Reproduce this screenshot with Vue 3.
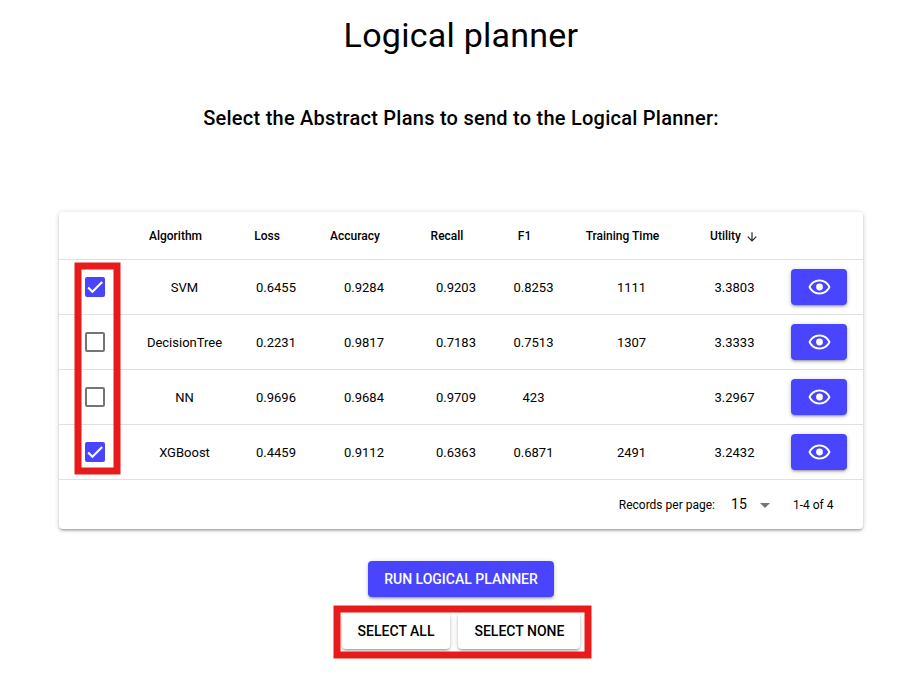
<template>
  <div class="planner-page">
    <h4 class="page-title">Logical planner</h4>
    <h6 class="page-subtitle">Select the Abstract Plans to send to the Logical Planner:</h6>

    <div class="plans-card">
      <table class="plans-table">
        <colgroup>
          <col class="col-check" />
          <col v-for="column in columns" :key="column.name" :class="'col-' + column.name" />
          <col class="col-action" />
        </colgroup>
        <thead>
          <tr>
            <th></th>
            <th v-for="column in columns" :key="column.name" @click="sortBy(column.name)">
              {{ column.label }}<svg
                class="sort-icon"
                :class="{ active: sortColumn === column.name, up: !descending }"
                viewBox="0 0 24 24"
              >
                <path d="M20 12l-1.41-1.41L13 16.17V4h-2v12.17l-5.58-5.59L4 12l8 8 8-8z" />
              </svg>
            </th>
            <th></th>
          </tr>
        </thead>
        <tbody>
          <tr v-for="plan in sortedPlans" :key="plan.algorithm">
            <td>
              <div
                class="checkbox"
                :class="{ checked: selected.includes(plan.algorithm) }"
                role="checkbox"
                :aria-checked="selected.includes(plan.algorithm)"
                @click="toggle(plan.algorithm)"
              >
                <svg v-if="selected.includes(plan.algorithm)" viewBox="0 0 24 24">
                  <path d="M1.73,12.91 8.1,19.28 22.79,4.59" />
                </svg>
              </div>
            </td>
            <td v-for="column in columns" :key="column.name" class="value">{{ plan[column.name] }}</td>
            <td>
              <button class="btn btn-primary btn-view" aria-label="View plan">
                <svg viewBox="-0.5 -0.5 24 24">
                  <path d="M12 6c3.79 0 7.17 2.13 8.82 5.5C19.17 14.87 15.79 17 12 17s-7.17-2.13-8.82-5.5C4.83 8.13 8.21 6 12 6m0-2C7 4 2.73 7.11 1 11.5 2.73 15.89 7 19 12 19s9.27-3.11 11-7.5C21.27 7.11 17 4 12 4z" />
                  <circle cx="12" cy="11.5" r="3.4" />
                </svg>
              </button>
            </td>
          </tr>
        </tbody>
      </table>
      <div class="table-bottom">
        <span>Records per page:</span>
        <div class="page-size">
          <span>15</span>
          <svg viewBox="0 0 24 24"><path d="M7 10l5 5 5-5z" /></svg>
        </div>
        <span class="page-range">1-{{ plans.length }} of {{ plans.length }}</span>
      </div>
      <svg class="highlight highlight-checks"><rect x="4" y="4" width="39" height="205" /></svg>
    </div>

    <div class="actions">
      <button class="btn btn-primary">Run logical planner</button>
      <div class="select-actions">
        <button class="btn" @click="selectAll">Select all</button>
        <button class="btn" @click="selectNone">Select none</button>
        <svg class="highlight highlight-select"><rect x="4" y="4" width="251" height="46" /></svg>
      </div>
    </div>
  </div>
</template>

<script setup>
import { computed, ref } from 'vue';

const columns = [
  { name: 'algorithm', label: 'Algorithm' },
  { name: 'loss', label: 'Loss' },
  { name: 'accuracy', label: 'Accuracy' },
  { name: 'recall', label: 'Recall' },
  { name: 'f1', label: 'F1' },
  { name: 'time', label: 'Training Time' },
  { name: 'utility', label: 'Utility' }
];

const plans = [
  { algorithm: 'SVM', loss: 0.6455, accuracy: 0.9284, recall: 0.9203, f1: 0.8253, time: 1111, utility: 3.3803 },
  { algorithm: 'DecisionTree', loss: 0.2231, accuracy: 0.9817, recall: 0.7183, f1: 0.7513, time: 1307, utility: 3.3333 },
  { algorithm: 'NN', loss: 0.9696, accuracy: 0.9684, recall: 0.9709, f1: 423, utility: 3.2967 },
  { algorithm: 'XGBoost', loss: 0.4459, accuracy: 0.9112, recall: 0.6363, f1: 0.6871, time: 2491, utility: 3.2432 }
];

const selected = ref(['SVM', 'XGBoost']);
const sortColumn = ref('utility');
const descending = ref(true);

const sortedPlans = computed(() => {
  const key = sortColumn.value;
  const sorted = [...plans].sort((a, b) => (a[key] > b[key] ? 1 : -1));
  return descending.value ? sorted.reverse() : sorted;
});

const sortBy = (name) => {
  descending.value = sortColumn.value === name ? !descending.value : true;
  sortColumn.value = name;
};

const toggle = (name) => {
  selected.value = selected.value.includes(name)
    ? selected.value.filter((item) => item !== name)
    : [...selected.value, name];
};

const selectAll = () => {
  selected.value = plans.map((plan) => plan.algorithm);
};

const selectNone = () => {
  selected.value = [];
};
</script>

<style>
body {
  background: #fff;
}
</style>

<style scoped>
.planner-page {
  height: 677px;
  overflow: hidden;
  box-sizing: border-box;
  padding: 15px 58px 0 59px;
  font-family: Roboto, "Liberation Sans", sans-serif;
  font-size: 14px;
  line-height: 1.5;
  color: #000;
}

.page-title {
  margin: 0;
  font-size: 34px;
  font-weight: 400;
  line-height: 40px;
  letter-spacing: 0.00735em;
  text-align: center;
}

.page-subtitle {
  margin: 47px 0 0;
  font-size: 20px;
  font-weight: 500;
  line-height: 32px;
  letter-spacing: 0.0125em;
  text-align: center;
}

.plans-card {
  position: relative;
  margin-top: 78px;
  height: 317px;
  border-radius: 4px;
  background: #fff;
  box-shadow: 0 1px 5px rgba(0, 0, 0, 0.2), 0 2px 2px rgba(0, 0, 0, 0.14), 0 3px 1px -2px rgba(0, 0, 0, 0.12);
}

.plans-table {
  width: 804px;
  table-layout: fixed;
  border-collapse: separate;
  border-spacing: 0;
}

.col-check { width: 72px; }
.col-algorithm { width: 107px; }
.col-loss { width: 76px; }
.col-accuracy { width: 100px; }
.col-recall { width: 84px; }
.col-f1 { width: 71px; }
.col-time { width: 125px; }
.col-utility { width: 81px; }
.col-action { width: 88px; }

.plans-table th,
.plans-table td {
  box-sizing: border-box;
  padding: 0;
  border-bottom: 1px solid rgba(0, 0, 0, 0.12);
  text-align: center;
  vertical-align: middle;
  white-space: nowrap;
}

.plans-table th {
  height: 48px;
  font-size: 12px;
  font-weight: 500;
  cursor: pointer;
}

.plans-table td {
  height: 55px;
  font-size: 13px;
}

.plans-table .value {
  padding-top: 2px;
}

.sort-icon {
  width: 14px;
  height: 14px;
  margin-left: 4px;
  vertical-align: -4px;
  opacity: 0;
}

.sort-icon.active {
  opacity: 0.86;
}

.sort-icon.up {
  transform: rotate(180deg);
}

.checkbox {
  box-sizing: border-box;
  width: 20px;
  height: 20px;
  margin: 0 auto;
  border: 2px solid rgba(0, 0, 0, 0.54);
  border-radius: 2px;
  cursor: pointer;
}

.checkbox.checked {
  border-color: #4945ff;
  background: #4945ff;
}

.checkbox svg {
  display: block;
  width: 16px;
  height: 16px;
  fill: none;
  stroke: #fff;
  stroke-width: 3.12px;
}

.btn {
  box-sizing: border-box;
  height: 36px;
  padding: 0 16px;
  border: 0;
  border-radius: 4px;
  background: #fff;
  box-shadow: 0 1px 5px rgba(0, 0, 0, 0.2), 0 2px 2px rgba(0, 0, 0, 0.14), 0 3px 1px -2px rgba(0, 0, 0, 0.12);
  color: #000;
  font-family: inherit;
  font-size: 14px;
  font-weight: 500;
  line-height: 24px;
  text-transform: uppercase;
  cursor: pointer;
}

.btn-primary {
  background: #4945ff;
  color: #fff;
}

.btn-view {
  display: block;
  width: 56px;
  margin: 0 auto;
}

.btn-view svg {
  display: block;
  width: 24px;
  height: 24px;
  fill: #fff;
}

.table-bottom {
  display: flex;
  align-items: center;
  justify-content: flex-end;
  height: 49px;
  padding-right: 29.5px;
  font-size: 12px;
}

.page-size {
  display: flex;
  align-items: center;
  margin-left: 16px;
  font-size: 14px;
  letter-spacing: 0.00937em;
}

.page-size svg {
  width: 24px;
  height: 24px;
  margin-left: 6px;
  fill: rgba(0, 0, 0, 0.54);
}

.page-range {
  margin-left: 16px;
}

.actions {
  display: flex;
  flex-direction: column;
  align-items: center;
  margin-top: 32px;
}

.select-actions {
  position: relative;
  display: flex;
  gap: 8px;
  margin-top: 16px;
}

/* Red frames around the selection controls */
.highlight {
  position: absolute;
  pointer-events: none;
}

.highlight rect {
  fill: none;
  stroke: #e81a1a;
  stroke-width: 7px;
}

.highlight-checks {
  top: 50px;
  left: 15px;
  width: 47px;
  height: 213px;
}

.highlight-select {
  top: -8px;
  left: -9px;
  width: 259px;
  height: 54px;
}
</style>
